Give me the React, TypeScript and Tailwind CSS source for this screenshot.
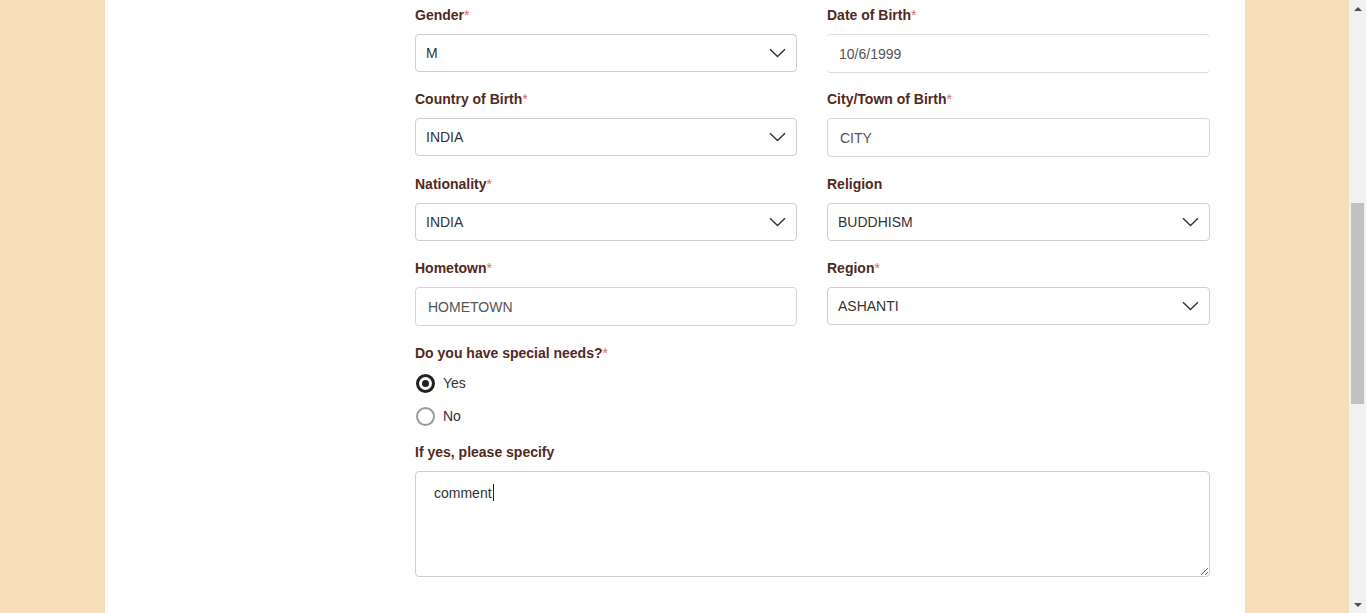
import React from "react";

type TField = {
  label: string;
  required?: boolean;
  value: string;
  kind: "select" | "input" | "date";
};

const fields: TField[] = [
  { label: "Gender", required: true, value: "M", kind: "select" },
  { label: "Date of Birth", required: true, value: "10/6/1999", kind: "date" },
  { label: "Country of Birth", required: true, value: "INDIA", kind: "select" },
  { label: "City/Town of Birth", required: true, value: "CITY", kind: "input" },
  { label: "Nationality", required: true, value: "INDIA", kind: "select" },
  { label: "Religion", value: "BUDDHISM", kind: "select" },
  { label: "Hometown", required: true, value: "HOMETOWN", kind: "input" },
  { label: "Region", required: true, value: "ASHANTI", kind: "select" },
];

const Label = ({ text, required }: { text: string; required?: boolean }) => (
  <div className="h-[20px] text-[14px] leading-[20px] font-bold text-[#522a1d]">
    {text}
    {required && <span className="text-[#e8646a] font-normal">*</span>}
  </div>
);

const Chevron = () => (
  <svg width="17" height="10" viewBox="0 0 17 10" fill="none">
    <path d="M1 1.2 L8.5 8.6 L16 1.2" stroke="#333" strokeWidth="1.4" />
  </svg>
);

const Field = ({ field, row }: { field: TField; row: number }) => {
  return (
    <div className={row === 1 ? "h-[85px]" : "h-[84px]"}>
      <Label text={field.label} required={field.required} />
      <div className="mt-[9px]">
        {field.kind === "select" && (
          <div className="h-[38px] border border-[#cfcfcf] rounded-[4px] flex items-center justify-between pl-[10px] pr-[10px] text-[14px] text-[#333]">
            <span>{field.value}</span>
            <Chevron />
          </div>
        )}
        {field.kind === "input" && (
          <input
            readOnly
            value={field.value}
            className="w-full h-[39px] border border-[#d6d6d6] rounded-[4px] px-[12px] text-[14px] text-[#555] outline-none"
          />
        )}
        {field.kind === "date" && (
          <input
            readOnly
            value={field.value}
            className="w-full h-[39px] border-y border-[#dcdcdc] rounded-[4px] px-[12px] text-[14px] text-[#555] outline-none"
          />
        )}
      </div>
    </div>
  );
};

const Radio = ({ checked, label }: { checked?: boolean; label: string }) => (
  <div className="h-[33px] flex items-center">
    {checked ? (
      <div className="ml-[1px] w-[19px] h-[19px] rounded-full border-[3px] border-[#222] flex items-center justify-center">
        <div className="w-[7px] h-[7px] rounded-full bg-[#222]" />
      </div>
    ) : (
      <div className="ml-[1px] w-[19px] h-[19px] rounded-full border-2 border-[#9a9a9a]" />
    )}
    <span className="ml-[8px] text-[14px] text-[#333]">{label}</span>
  </div>
);

export default function App() {
  return (
    <div
      className="h-[613px] flex overflow-hidden bg-[#f5deb9]"
      style={{ fontFamily: '"Liberation Sans", Arial, sans-serif' }}
    >
      <div className="w-[105px] shrink-0" />

      {/* White panel */}
      <div className="w-[1140px] shrink-0 bg-white pl-[310px] pr-[35px] pt-[5px]">
        <div className="grid grid-cols-[382px_383px] gap-x-[30px]">
          {fields.map((field, index) => (
            <Field key={index} field={field} row={Math.floor(index / 2)} />
          ))}
        </div>

        <div className="mt-[1px]">
          <Label text="Do you have special needs?" required />
          <div className="mt-[4px]">
            <Radio checked label="Yes" />
            <Radio label="No" />
          </div>
        </div>

        <div className="mt-[9px]">
          <Label text="If yes, please specify" />
          <div className="relative mt-[9px]">
            <textarea
              readOnly
              value="comment"
              className="block w-full h-[106px] border border-[#cfcfcf] rounded-[4px] px-[18px] py-[11px] text-[14px] text-[#333] outline-none"
            />
            {/* text caret */}
            <div className="absolute left-[78px] top-[13px] w-px h-[17px] bg-[#222]" />
          </div>
        </div>
      </div>

      <div className="flex-1" />

      {/* Scrollbar */}
      <div className="w-[17px] shrink-0 bg-[#f1f1f1] flex flex-col items-center">
        <div className="h-[17px] flex items-center justify-center">
          <div className="w-0 h-0 border-x-[4px] border-x-transparent border-b-[4px] border-b-[#505050]" />
        </div>
        <div className="mt-[186px] w-[13px] h-[201px] bg-[#c1c1c1]" />
        <div className="flex-1" />
        <div className="h-[17px] flex items-center justify-center">
          <div className="w-0 h-0 border-x-[4px] border-x-transparent border-t-[4px] border-t-[#505050]" />
        </div>
      </div>
    </div>
  );
}
